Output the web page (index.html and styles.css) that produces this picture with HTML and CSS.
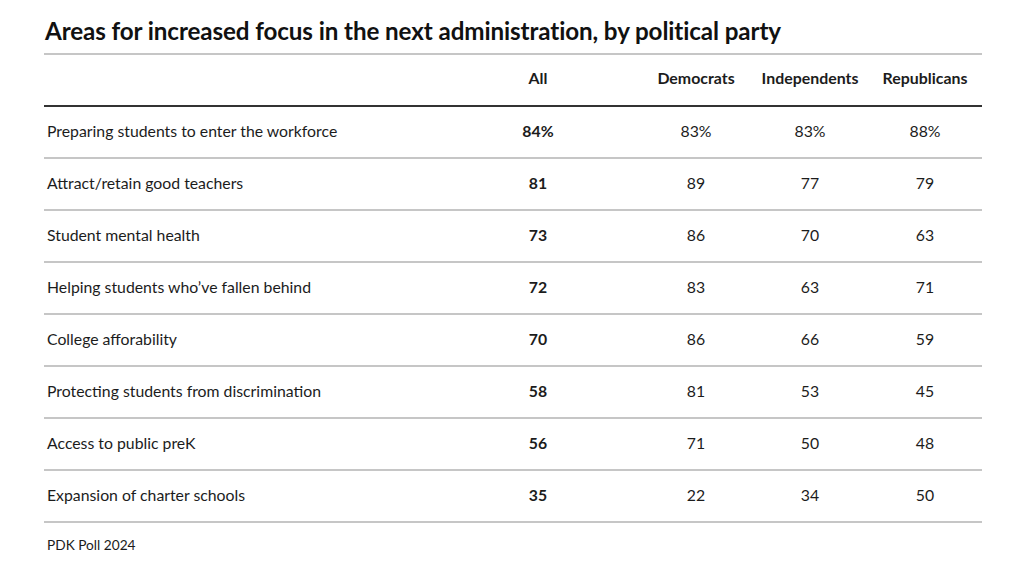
FILE: index.html
```html
<!DOCTYPE html>
<html lang="en">
<head>
<meta charset="utf-8">
<title>Areas for increased focus</title>
<link rel="stylesheet" href="styles.css">
</head>
<body>
<div class="page">
  <h1 class="title">Areas for increased focus in the next administration, by political party</h1>
  <div class="table">
    <div class="row head">
      <div class="label"></div>
      <div class="cell all">All</div>
      <div class="cell dem">Democrats</div>
      <div class="cell">Independents</div>
      <div class="cell">Republicans</div>
    </div>
    <div class="row">
      <div class="label">Preparing students to enter the workforce</div>
      <div class="cell all">84%</div>
      <div class="cell dem">83%</div>
      <div class="cell">83%</div>
      <div class="cell">88%</div>
    </div>
    <div class="row">
      <div class="label">Attract/retain good teachers</div>
      <div class="cell all">81</div>
      <div class="cell dem">89</div>
      <div class="cell">77</div>
      <div class="cell">79</div>
    </div>
    <div class="row">
      <div class="label">Student mental health</div>
      <div class="cell all">73</div>
      <div class="cell dem">86</div>
      <div class="cell">70</div>
      <div class="cell">63</div>
    </div>
    <div class="row">
      <div class="label">Helping students who’ve fallen behind</div>
      <div class="cell all">72</div>
      <div class="cell dem">83</div>
      <div class="cell">63</div>
      <div class="cell">71</div>
    </div>
    <div class="row">
      <div class="label">College afforability</div>
      <div class="cell all">70</div>
      <div class="cell dem">86</div>
      <div class="cell">66</div>
      <div class="cell">59</div>
    </div>
    <div class="row">
      <div class="label">Protecting students from discrimination</div>
      <div class="cell all">58</div>
      <div class="cell dem">81</div>
      <div class="cell">53</div>
      <div class="cell">45</div>
    </div>
    <div class="row">
      <div class="label">Access to public preK</div>
      <div class="cell all">56</div>
      <div class="cell dem">71</div>
      <div class="cell">50</div>
      <div class="cell">48</div>
    </div>
    <div class="row">
      <div class="label">Expansion of charter schools</div>
      <div class="cell all">35</div>
      <div class="cell dem">22</div>
      <div class="cell">34</div>
      <div class="cell">50</div>
    </div>
  </div>
  <p class="source">PDK Poll 2024</p>
</div>
</body>
</html>
```

FILE: styles.css
```css
html, body {
  margin: 0;
  padding: 0;
  background: #ffffff;
}

body {
  font-family: Lato, "Open Sans", "Liberation Sans", sans-serif;
  color: #1c1c1c;
}

.page {
  width: 938px;
  padding: 17px 0 0 44px;
}

.title {
  margin: 0 0 8px 1px;
  font-size: 24.2px;
  line-height: 28px;
  font-weight: 700;
  color: #111111;
  letter-spacing: -0.1px;
}

.table {
  border-top: 2px solid #c6c6c6;
}

.row {
  display: grid;
  grid-template-columns: 436px 116px 156px 116px 114px;
  align-items: center;
  box-sizing: border-box;
  height: 52px;
  padding-bottom: 3px;
  border-bottom: 2px solid #c6c6c6;
  font-size: 15.8px;
}

.row.head {
  padding-bottom: 5px;
  border-bottom: 2px solid #333333;
  font-weight: 700;
  font-size: 15.9px;
}

.label {
  padding-left: 3px;
}

.cell {
  text-align: center;
}

.cell.all {
  font-weight: 700;
}

.cell.dem {
  padding-left: 44px;
}

.source {
  margin: 13px 0 0 3px;
  font-size: 13.7px;
  line-height: 18px;
}
```
